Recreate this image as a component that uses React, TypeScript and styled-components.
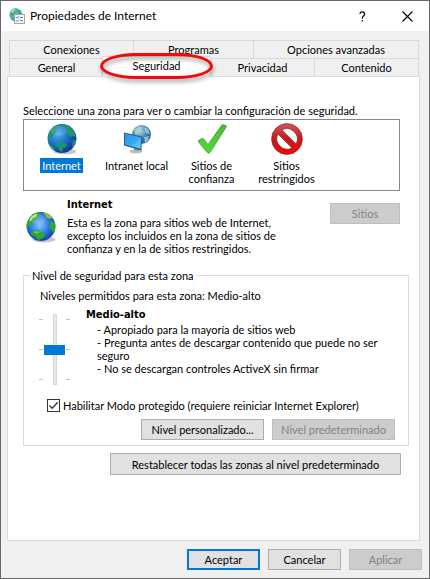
import React, { useState } from "react";
import styled, { createGlobalStyle, css } from "styled-components";

const UI_FONT = 'Lato, "Noto Sans", sans-serif';

const GlobalStyle = createGlobalStyle`
  *, *::before, *::after { box-sizing: border-box; }
  body { margin: 0; background: #f0f0f0; }
  button, input, fieldset { font: inherit; color: inherit; margin: 0; }
`;

const Dialog = styled.main`
  border: 1px solid #69696b;
  background: #f0f0f0;
  color: #000;
  font: 11px/13px ${UI_FONT};
`;

const TitleBar = styled.header`
  display: flex;
  align-items: center;
  height: 30px;
  padding: 0 10px 0 8px;
  background: #fff;
`;

const Title = styled.h1`
  flex: 1;
  margin: 0 0 0 5px;
  font: 12px/16px ${UI_FONT};
`;

const CaptionButton = styled.button`
  display: grid;
  place-items: center;
  width: 45px;
  height: 28px;
  padding: 0;
  border: 0;
  background: none;
  &:last-child { width: 24px; margin-left: 10px; }
`;

const Body = styled.div`
  padding: 9px 7px 8px 6px;
`;

const TabList = styled.div`
  padding: 0 3px 0 2px;
`;

const TabRow = styled.div`
  display: flex;
  height: 18px;
  border-left: 1px solid #d9d9d9;
`;

const TabSlot = styled.div<{ $grow: number }>`
  position: relative;
  display: flex;
  flex: ${(p) => p.$grow} 1 0;
`;

const Tab = styled.button<{ $active?: boolean }>`
  flex: 1;
  padding: 0;
  border: solid #d9d9d9;
  border-width: 1px 1px 0 0;
  background: #f0f0f0;
  ${(p) =>
    p.$active &&
    css`
      margin: -2px 0 -1px -2px;
      padding-bottom: 3px;
      border-left-width: 1px;
      background: #fff;
      z-index: 1;
    `}
`;

const Highlight = styled.span`
  position: absolute;
  z-index: 2;
  inset: -5px -2px -3px -4px;
  border: 3px solid #f00a0a;
  border-radius: 36px / 13px;
  filter: drop-shadow(1px 3px 2px rgba(0, 0, 0, 0.4));
  pointer-events: none;
`;

const Panel = styled.section`
  padding: 27px 10px 65px 15px;
  margin-right: 2px;
  border: 1px solid #dcdcdc;
  background: #fff;
`;

const Text = styled.p`
  margin: 0;
`;

const Strong = styled.h2`
  margin: 0;
  font-size: 11px;
  line-height: 13px;
  font-weight: bold;
  font-family: "DejaVu Sans Condensed", "DejaVu Sans", sans-serif;
`;

const ZoneList = styled.div`
  display: flex;
  height: 72px;
  margin: 2px 9px 0 0;
  padding-top: 3px;
  border: 1px solid #828790;
`;

const Zone = styled.button`
  display: flex;
  flex: 0 0 75px;
  flex-direction: column;
  align-items: center;
  gap: 3px;
  padding: 0;
  border: 0;
  background: none;
`;

const ZoneLabel = styled.span<{ $selected: boolean }>`
  padding: 1px 2px;
  color: ${(p) => (p.$selected ? "#fff" : "#000")};
  background: ${(p) => (p.$selected ? "#0078d7" : "transparent")};
`;

const ZoneInfo = styled.div`
  display: flex;
  align-items: flex-start;
  margin: 7px 9px 0 2px;
  & > svg { flex: none; margin-top: 13px; }
`;

const ZoneDescription = styled.div`
  flex: 1;
  padding-left: 10px;
  white-space: nowrap;
  p { margin-top: 5px; }
`;

const PushButton = styled.button<{ $width: number; $primary?: boolean }>`
  flex: none;
  width: ${(p) => p.$width}px;
  height: 21px;
  padding: 0;
  border: ${(p) => (p.$primary ? "2px solid #0078d7" : "1px solid #adadad")};
  background: #e1e1e1;
  white-space: nowrap;
  &:disabled {
    border-color: #bfbfbf;
    background: #ccc;
    color: #838383;
  }
`;

const SitesButton = styled(PushButton)`
  margin-top: 5px;
`;

const ResetButton = styled(PushButton)`
  height: 22px;
`;

const GroupBox = styled.fieldset`
  min-width: 0;
  margin-top: 14px;
  padding: 7px 13px 5px 16px;
  border: 1px solid #dcdcdc;
`;

const Legend = styled.legend`
  margin-left: -10px;
  padding: 0 2px;
`;

const LevelRow = styled.div`
  display: flex;
  gap: 16px;
  margin: 6px 0 0 -1px;
`;

const SliderBox = styled.div`
  display: flex;
  gap: 1px;
  height: 71px;
  margin-top: 6px;
`;

const Ticks = styled.span`
  display: flex;
  flex-direction: column;
  justify-content: space-between;
  width: 4px;
  padding: 5px 0;
  &::before, &::after { content: ""; height: 1px; background: #c4c4c4; }
  i { height: 1px; background: #c4c4c4; }
`;

const Slider = styled.input`
  appearance: none;
  writing-mode: vertical-lr;
  direction: rtl;
  width: 21px;
  height: 71px;
  background: none;
  &::-webkit-slider-runnable-track {
    width: 4px;
    height: 71px;
    border: 1px solid #d6d6d6;
    background: #e7eaea;
  }
  &::-webkit-slider-thumb {
    appearance: none;
    width: 21px;
    height: 10px;
    margin-left: -10px;
    background: #0078d7;
  }
`;

const LevelText = styled.div`
  min-width: 0;
  flex: 1;
`;

const Bullets = styled.ul`
  margin: 2px 0 0;
  padding: 0 0 0 11px;
  list-style: none;
`;

const CheckLabel = styled.label`
  display: flex;
  align-items: center;
  gap: 3px;
  margin: 14px 0 0 7px;
`;

const CheckBox = styled.input`
  appearance: none;
  width: 13px;
  height: 13px;
  border: 1px solid #333;
  background: #fff;
  &:checked {
    background: #fff
      url('data:image/svg+xml,<svg xmlns="http://www.w3.org/2000/svg" viewBox="0 0 11 11"><path d="M1.5 5.5 4.2 8.2 9.7 2.3" fill="none" stroke="%23333" stroke-width="1.3"/></svg>');
  }
`;

const ButtonRow = styled.div<{ $top: number }>`
  display: flex;
  justify-content: flex-end;
  gap: 8px;
  margin-top: ${(p) => p.$top}px;
`;

const ResetRow = styled(ButtonRow)`
  padding-right: 8px;
`;

function Globe({ id }: { id: string }) {
  const bright = id === "info";
  return (
    <svg width="32" height="32" viewBox="0 0 32 32" aria-hidden="true">
      <defs>
        <radialGradient id={id} cx={bright ? "45%" : "35%"} cy={bright ? "45%" : "35%"} r="65%">
          <stop offset="0" stopColor={bright ? "#86c8fa" : "#4aaaea"} />
          <stop offset="0.5" stopColor={bright ? "#2c7ce0" : "#1c78c8"} />
          <stop offset="1" stopColor={bright ? "#0a2f96" : "#0d3f92"} />
        </radialGradient>
        <clipPath id={`${id}-clip`}>
          <circle cx="16" cy="15.5" r="14.4" />
        </clipPath>
      </defs>
      <ellipse cx="19" cy="28.5" rx="11.5" ry="3" fill="#000" opacity="0.22" />
      <circle cx="16" cy="15.5" r="14.4" fill={`url(#${id})`} />
      {bright ? (
        <g clipPath={`url(#${id}-clip)`} fill="#2fa82f">
          <path d="M1 17V8l6-6 7-2 2 3-3 1-1 4-4 2-2 4-2 1z" />
          <path d="m18 2 5 0 4 4-1 2-4-1-2-3z" fill="#7fc843" />
          <path d="m6 21 5-2 6 2 3 3-2 3-5 2-3-4-4-1z" />
          <path d="m26 10 2 0 4 4-1 8-3-1-3-4 0-4z" />
          <path d="m6 6 4-3 2 0-1 3-3 1-2 3-2 0z" fill="#b4e27a" />
          <path d="m8 21 3-1 4 1-3 2z" fill="#5fd04c" />
        </g>
      ) : (
        <g clipPath={`url(#${id}-clip)`} fill="#1d9474">
          <path d="m3 9 5-6 4-1 2 2-3 2-1 4-4 3-2 5-2-3z" />
          <path d="m16 1 6 1 6 6 2 6-2-1-3 1-3-2-2-4 0-3-4-2z" />
          <path d="m2 20 4 3 3 4-1 2-6-6z" />
          <path d="m11 20 4-1 5 2 1 2-4 2-1 4-3-2-1-3-3-2z" />
          <path d="m27 17 3 0-2 6-2 1z" />
        </g>
      )}
      <ellipse cx="13" cy="8" rx="8" ry="5" fill="#fff" opacity="0.15" />
    </svg>
  );
}

function AppIcon() {
  return (
    <svg width="16" height="16" viewBox="0 0 16 16" aria-hidden="true">
      <circle cx="6.8" cy="6.8" r="6.5" fill="#5aa9dc" />
      <path d="M1 4 4 1l3-.7L8 2 6 4 5 7 2 8zM9 2l3 1 1 4-3-1-1-2zM3 9l3 1v3l-3-1z" fill="#44ad65" />
      <path d="M1 4 4 1l3 0-3 4z" fill="#bfe8d6" opacity=".7" />
      <rect x="5.5" y="6.5" width="10" height="9" fill="#f7f7f7" stroke="#a5a5a5" />
      <path d="M11 9.5h3M11 12.7h3" stroke="#777" />
      <path d="m7 9.2 1 1 2-2M7 12.5l1 1 2-2" fill="none" stroke="#2784d0" />
    </svg>
  );
}

function IntranetIcon() {
  return (
    <svg width="32" height="32" viewBox="-1 -2 32 32" aria-hidden="true">
      <defs>
        <radialGradient id="net" cx="40%" cy="30%">
          <stop offset="0" stopColor="#b6dcee" />
          <stop offset="1" stopColor="#2e6f9f" />
        </radialGradient>
        <linearGradient id="screen" x2="1" y2="1">
          <stop stopColor="#2aa0ee" />
          <stop offset="1" stopColor="#62c8fb" />
        </linearGradient>
      </defs>
      <circle cx="19.5" cy="9.5" r="9.5" fill="url(#net)" />
      <path d="m12 5 4-3 5 0-2 3-3 2-2 4zM22 2l4 2 2 5-4-1-1-3zM22 12l5-1-1 5-3 2z" fill="#a3d3c9" opacity=".8" />
      <ellipse cx="14" cy="26.4" rx="6.5" ry="1.9" fill="#b9bfc3" />
      <path d="m12 21 5 1v4h-5z" fill="#8d979d" />
      <path d="m2 7.5 18 4-.5 14L2 20.5z" fill="#2d5c7d" />
      <path d="m3 8.8 16 3.5-.4 11.5L3 19.4z" fill="url(#screen)" />
      <path d="m3 8.8 16 3.5-9 8.6-7-1.5z" fill="#2494e8" opacity=".45" />
    </svg>
  );
}

function CheckIcon() {
  return (
    <svg width="32" height="32" viewBox="0 0 32 32" aria-hidden="true">
      <defs>
        <linearGradient id="tick" x2="0" y2="1">
          <stop stopColor="#4fb93b" />
          <stop offset="1" stopColor="#48e02f" />
        </linearGradient>
      </defs>
      <path
        d="M2.5 17.5 6 15.5q1-.4 1.8.6l4.2 5.5L25.5 2.5q.8-1.2 2-.8l2.6 1q.6.4.2 1.2L14 29.5q-1.4 1.6-2.7 0L2.3 18.7q-.6-.8.2-1.2z"
        fill="url(#tick)"
        stroke="#48983c"
        strokeWidth=".8"
      />
    </svg>
  );
}

function BlockedIcon() {
  return (
    <svg width="32" height="32" viewBox="0 0 32 32" aria-hidden="true">
      <defs>
        <linearGradient id="stop" x2="0" y2="1">
          <stop stopColor="#c95a5a" />
          <stop offset="0.48" stopColor="#c01c1c" />
          <stop offset="1" stopColor="#f20808" />
        </linearGradient>
      </defs>
      <path
        fillRule="evenodd"
        d="M16 .6a15.4 15.4 0 1 0 0 30.8A15.4 15.4 0 0 0 16 .6zM11 6.9A10.4 10.4 0 0 1 25 21zM7 11l14 14A10.4 10.4 0 0 1 7 11z"
        fill="url(#stop)"
        stroke="#a32020"
        strokeWidth=".7"
      />
    </svg>
  );
}

const zones = [
  { name: "Internet", icon: <Globe id="zone" /> },
  { name: "Intranet local", icon: <IntranetIcon /> },
  { name: "Sitios de confianza", icon: <CheckIcon /> },
  { name: "Sitios restringidos", icon: <BlockedIcon /> },
];

export default function App() {
  const [zone, setZone] = useState(0);
  return (
    <>
      <GlobalStyle />
      <Dialog>
        <TitleBar>
          <AppIcon />
          <Title>Propiedades de Internet</Title>
          <CaptionButton aria-label="Ayuda">
            <svg width="7" height="11" viewBox="0 0 7 11">
              <path d="M1 3Q1 .8 3.3.8T5.6 3q0 1.2-1.2 2.1T3.3 7.7M3.3 9v1.5" fill="none" stroke="#000" strokeWidth="1.2" />
            </svg>
          </CaptionButton>
          <CaptionButton aria-label="Cerrar">
            <svg width="11" height="11" viewBox="0 0 11 11">
              <path d="m.5.5 10 10M10.5.5l-10 10" stroke="#000" strokeWidth="1.1" />
            </svg>
          </CaptionButton>
        </TitleBar>
        <Body>
          <TabList role="tablist">
            <TabRow>
              <TabSlot $grow={124}><Tab role="tab">Conexiones</Tab></TabSlot>
              <TabSlot $grow={120}><Tab role="tab">Programas</Tab></TabSlot>
              <TabSlot $grow={165}><Tab role="tab">Opciones avanzadas</Tab></TabSlot>
            </TabRow>
            <TabRow>
              <TabSlot $grow={94}><Tab role="tab">General</Tab></TabSlot>
              <TabSlot $grow={107}>
                <Tab role="tab" aria-selected="true" $active>Seguridad</Tab>
                <Highlight />
              </TabSlot>
              <TabSlot $grow={104}><Tab role="tab">Privacidad</Tab></TabSlot>
              <TabSlot $grow={104}><Tab role="tab">Contenido</Tab></TabSlot>
            </TabRow>
          </TabList>
          <Panel role="tabpanel">
            <Text id="zones">Seleccione una zona para ver o cambiar la configuración de seguridad.</Text>
            <ZoneList role="listbox" aria-labelledby="zones">
              {zones.map((z, i) => (
                <Zone key={z.name} role="option" aria-selected={i === zone} onClick={() => setZone(i)}>
                  {z.icon}
                  <ZoneLabel $selected={i === zone}>{z.name}</ZoneLabel>
                </Zone>
              ))}
            </ZoneList>
            <ZoneInfo>
              <Globe id="info" />
              <ZoneDescription>
                <Strong>Internet</Strong>
                <Text>
                  Esta es la zona para sitios web de Internet,
                  <br />
                  excepto los incluidos en la zona de sitios de
                  <br />
                  confianza y en la de sitios restringidos.
                </Text>
              </ZoneDescription>
              <SitesButton $width={70} disabled>Sitios</SitesButton>
            </ZoneInfo>
            <GroupBox>
              <Legend>Nivel de seguridad para esta zona</Legend>
              <Text>Niveles permitidos para esta zona: Medio-alto</Text>
              <LevelRow>
                <SliderBox>
                  <Ticks><i /></Ticks>
                  <Slider type="range" min={0} max={2} defaultValue={1} aria-label="Nivel de seguridad" />
                  <Ticks><i /></Ticks>
                </SliderBox>
                <LevelText>
                  <Strong>Medio-alto</Strong>
                  <Bullets>
                    <li>- Apropiado para la mayoría de sitios web</li>
                    <li>- Pregunta antes de descargar contenido que puede no ser<br />seguro</li>
                    <li>- No se descargan controles ActiveX sin firmar</li>
                  </Bullets>
                </LevelText>
              </LevelRow>
              <CheckLabel>
                <CheckBox type="checkbox" defaultChecked />
                Habilitar Modo protegido (requiere reiniciar Internet Explorer)
              </CheckLabel>
              <ButtonRow $top={7}>
                <PushButton $width={123}>Nivel personalizado...</PushButton>
                <PushButton $width={123} disabled>Nivel predeterminado</PushButton>
              </ButtonRow>
            </GroupBox>
            <ResetRow $top={7}>
              <ResetButton $width={291}>Restablecer todas las zonas al nivel predeterminado</ResetButton>
            </ResetRow>
          </Panel>
          <ButtonRow $top={8}>
            <PushButton $width={73} $primary>Aceptar</PushButton>
            <PushButton $width={73}>Cancelar</PushButton>
            <PushButton $width={73} disabled>Aplicar</PushButton>
          </ButtonRow>
        </Body>
      </Dialog>
    </>
  );
}
